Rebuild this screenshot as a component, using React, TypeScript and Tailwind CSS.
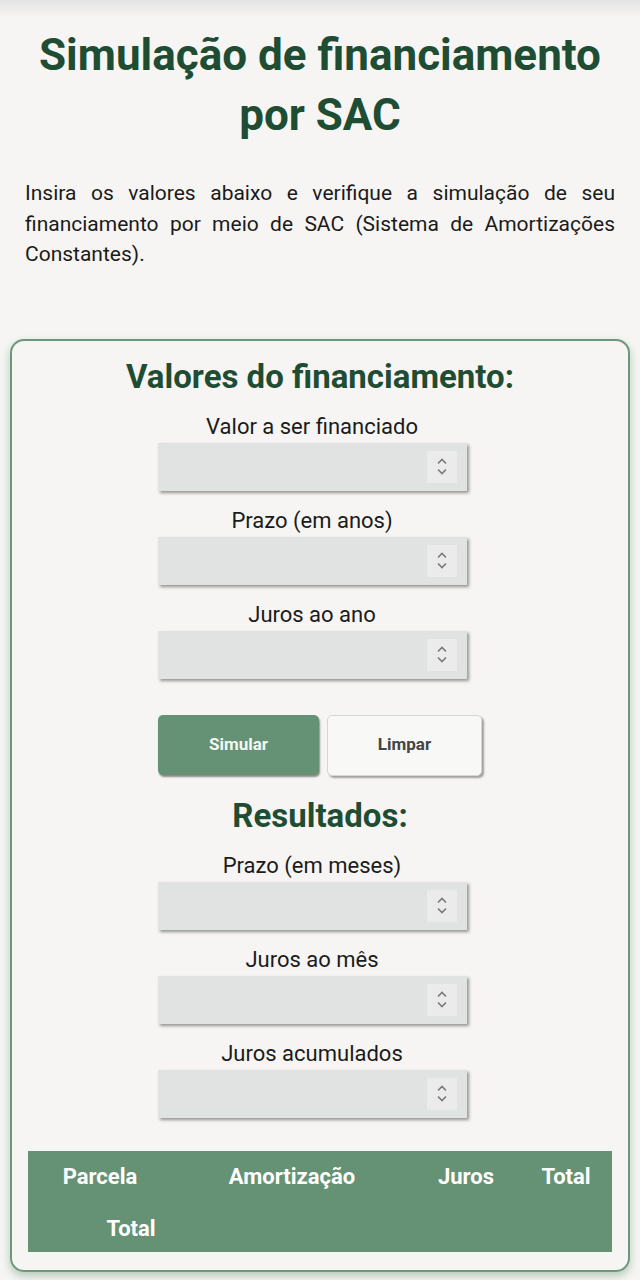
import { useState } from "react";

const Spinner = () => (
  <div className="flex h-[32px] w-[30px] flex-col items-center justify-center gap-[3px] bg-[#ebebeb]">
    <svg width="12" height="8" viewBox="0 0 12 8" fill="none">
      <path d="M2 6.5 L6 2.5 L10 6.5" stroke="#7a7a7a" strokeWidth="1.6" />
    </svg>
    <svg width="12" height="8" viewBox="0 0 12 8" fill="none">
      <path d="M2 1.5 L6 5.5 L10 1.5" stroke="#7a7a7a" strokeWidth="1.6" />
    </svg>
  </div>
);

const Field = ({ label }: { label: string }) => (
  <div className="flex flex-col items-center pr-[16px]">
    <label className="h-[24px] text-[22px] leading-[24px] text-[#1b1b1b]">{label}</label>
    <div className="mt-[4px] flex h-[48px] w-[309px] items-center justify-end bg-[#e1e2e2] pr-[10px] shadow-[2px_2px_3px_rgba(0,0,0,0.4)]">
      <Spinner />
    </div>
  </div>
);

export default function App() {
  const [active] = useState(true);

  return (
    <div className="min-h-[1280px] bg-[linear-gradient(#e4e4e4,#f6f5f3_18px)] font-['Roboto',sans-serif] text-[#1b1b1b]">
      <h1 className="px-[20px] pt-[25px] text-center text-[44px] font-bold leading-[60px] text-[#1e4d34]">
        Simulação de financiamento por SAC
      </h1>

      <p className="mt-[33px] px-[25px] text-justify text-[21px] leading-[30.5px]">
        Insira os valores abaixo e verifique a simulação de seu financiamento por meio de SAC (Sistema de
        Amortizações Constantes).
      </p>

      <div className="mx-[10px] mt-[69px] rounded-[14px] border-2 border-[#6b987a] px-[16px] pb-[18px] pt-[16px] shadow-[0_4px_8px_rgba(101,146,116,0.45)]">
        <h2 className="text-center text-[33px] font-bold leading-[40px] text-[#1e4d34]">
          Valores do financiamento:
        </h2>

        <div className="mt-[18px] flex flex-col gap-[18px]">
          <Field label="Valor a ser financiado" />
          <Field label="Prazo (em anos)" />
          <Field label="Juros ao ano" />
        </div>

        <div className="mt-[36px] flex justify-center gap-[8px]">
          <button
            className={
              "h-[60px] w-[161px] rounded-[5px] text-[17px] font-bold text-[#f4f8f4] shadow-[1px_2px_2px_rgba(0,0,0,0.45)] " +
              (active ? "bg-[#659274]" : "bg-[#7aa487]")
            }
          >
            Simular
          </button>
          <button className="h-[61px] w-[155px] rounded-[5px] border border-[#d6d6d6] bg-[#f8f8f7] text-[17px] font-bold text-[#444444] shadow-[2px_2px_2px_rgba(0,0,0,0.35)]">
            Limpar
          </button>
        </div>

        <h2 className="mt-[20px] text-center text-[33px] font-bold leading-[40px] text-[#1e4d34]">Resultados:</h2>

        <div className="mt-[18px] flex flex-col gap-[18px]">
          <Field label="Prazo (em meses)" />
          <Field label="Juros ao mês" />
          <Field label="Juros acumulados" />
        </div>

        <div className="mt-[33px] bg-[#659274] pb-[10px] pt-[13px] text-[22px] font-bold leading-[26px] text-white">
          <div className="flex">
            <div className="w-[144px] text-center">Parcela</div>
            <div className="w-[240px] text-center">Amortização</div>
            <div className="w-[108px] text-center">Juros</div>
            <div className="w-[92px] text-center">Total</div>
          </div>
          <div className="mt-[26px] flex">
            <div className="w-[206px] text-center">Total</div>
          </div>
        </div>
      </div>
    </div>
  );
}
